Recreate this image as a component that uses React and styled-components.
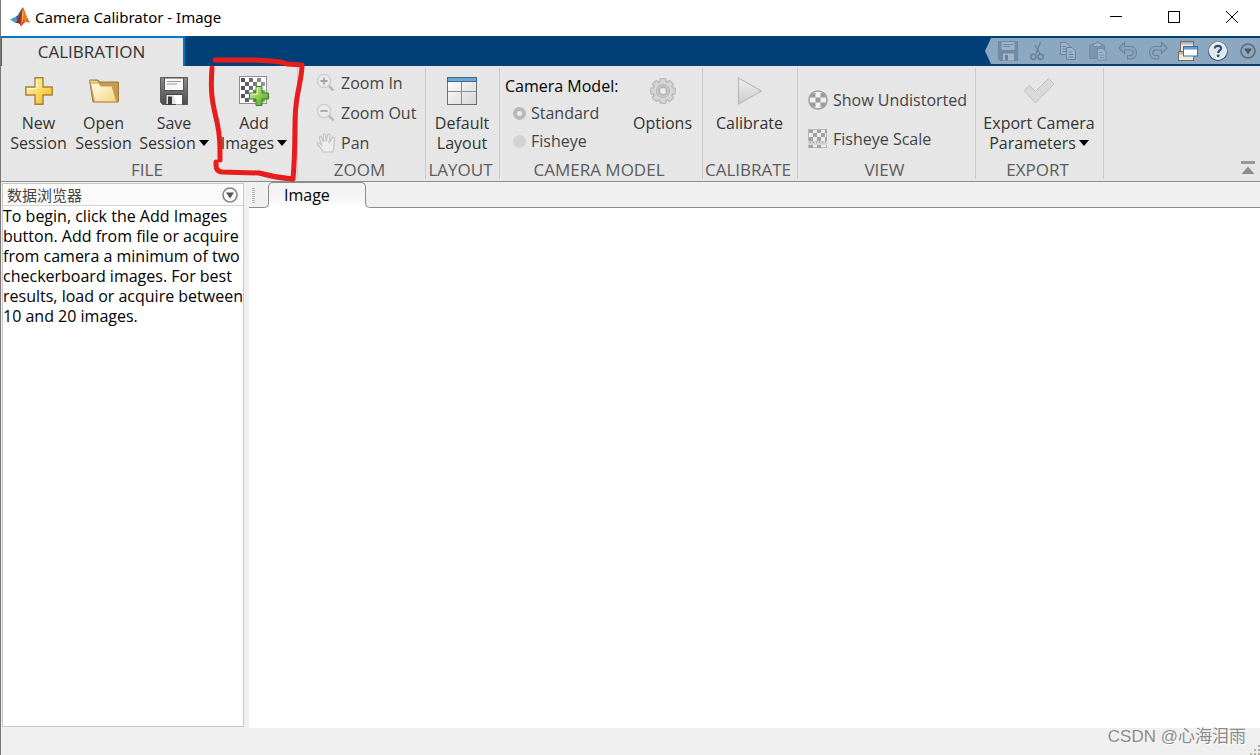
import React, { useState } from "react";
import styled, { createGlobalStyle, css } from "styled-components";

const GlobalStyle = createGlobalStyle`
  * {
    box-sizing: border-box;
  }

  body {
    margin: 0;
    background: #f0f0f0;
    font-family: "Open Sans", "Noto Sans", "Noto Sans CJK SC", sans-serif;
    font-size: 16px;
    line-height: 20px;
    color: #000;
  }

  button,
  input {
    font: inherit;
    margin: 0;
  }

  svg {
    display: block;
    flex: none;
  }
`;

/* ---------- icons ---------- */

const MatlabLogo = () => (
  <svg width="20" height="20" viewBox="0 0 20 20">
    <defs>
      <linearGradient id="peak" x1="0" y1="0" x2="1" y2="0">
        <stop offset="0" stopColor="#6d1d1c" />
        <stop offset="0.45" stopColor="#c23a1c" />
        <stop offset="0.7" stopColor="#ee8a2c" />
        <stop offset="1" stopColor="#a82c1a" />
      </linearGradient>
    </defs>
    <path d="M0 12.5 L6 9.5 L9 13 L5.5 16 Z" fill="#4a9bd4" />
    <path d="M6 9.5 C8.5 9 9.5 4 12.3 1 L11 10 L7.5 14.5 Z" fill="#3a5f8c" />
    <path
      d="M12.8 0 C15 3 16.5 10.5 20 16 C17 14 14.8 14.5 11 19.5 C10 16.5 8.5 15.5 5.5 16 C9.5 12.5 10.5 4 12.8 0 Z"
      fill="url(#peak)"
    />
    <path d="M12.9 1 C14.2 6 13.8 12 11 19.5 C12.2 12 11.8 7 12.9 1 Z" fill="#ffb648" />
  </svg>
);

const PlusIcon = () => (
  <svg width="28" height="28" viewBox="0 0 28 28">
    <defs>
      <linearGradient id="gold" x1="0" y1="0" x2="1" y2="1">
        <stop offset="0" stopColor="#fff6c4" />
        <stop offset="0.5" stopColor="#fbdb62" />
        <stop offset="1" stopColor="#eeb41c" />
      </linearGradient>
    </defs>
    <path
      d="M10 0.8 H18 V10 H27.2 V18 H18 V27.2 H10 V18 H0.8 V10 H10 Z"
      fill="url(#gold)"
      stroke="#a8803a"
      strokeWidth="1.4"
    />
    <path d="M11.5 2.5 V11.5 H2.5" fill="none" stroke="#fffbe4" strokeWidth="1.2" />
  </svg>
);

const FolderIcon = () => (
  <svg width="32" height="28" viewBox="0 0 32 28">
    <defs>
      <linearGradient id="folder" x1="0" y1="0" x2="1" y2="1">
        <stop offset="0" stopColor="#fffce8" />
        <stop offset="1" stopColor="#f3d983" />
      </linearGradient>
    </defs>
    <path d="M1.5 3 H10 L12 5 H30.5 V25 H5 Z" fill="#c69a4c" stroke="#a27835" />
    <path d="M1.5 3.5 L4.5 7.5 H8 L10 4 Z" fill="#f0d693" />
    <path d="M2.5 6 H10.5 L13 9 H24 L28.5 24.8 H6.5 Z" fill="url(#folder)" stroke="#c5a25a" />
  </svg>
);

const SaveIcon = () => (
  <svg width="28" height="28" viewBox="0 0 28 28">
    <defs>
      <linearGradient id="disk" x1="0" y1="0" x2="0" y2="1">
        <stop offset="0" stopColor="#8b8b8b" />
        <stop offset="1" stopColor="#4c4c4c" />
      </linearGradient>
    </defs>
    <path d="M0.5 0.5 H27.5 V27.5 H2.5 L0.5 25 Z" fill="url(#disk)" stroke="#5a5a5a" />
    <rect x="4.5" y="1" width="19" height="12.5" fill="#f7f7f7" stroke="#555" />
    <path d="M7 4.5 H21 M7 7 H17" stroke="#9a9a9a" />
    <rect x="6" y="17.5" width="16" height="10" fill="#e4e4e4" stroke="#444" />
    <path d="M14 18 H22 V27.5 H16 Z" fill="#fff" />
    <rect x="8" y="19.5" width="4" height="8" fill="#3d3d3d" />
  </svg>
);

const checks = (cols, size, start) => {
  const out = [];
  for (let r = 0; r < cols; r++) {
    for (let c = 0; c < cols; c++) {
      if ((r + c) % 2 === 0) {
        out.push(`M${start + c * size} ${start + r * size}h${size}v${size}h-${size}z`);
      }
    }
  }
  return out.join("");
};

const AddImagesIcon = () => (
  <svg width="30" height="30" viewBox="0 0 30 30">
    <defs>
      <linearGradient id="green" x1="0" y1="0" x2="1" y2="1">
        <stop offset="0" stopColor="#d9f5a6" />
        <stop offset="0.5" stopColor="#8fce52" />
        <stop offset="1" stopColor="#4a9c2c" />
      </linearGradient>
      <linearGradient id="board" x1="0" y1="0" x2="1" y2="0">
        <stop offset="0" stopColor="#4a5057" />
        <stop offset="1" stopColor="#9a9a9a" />
      </linearGradient>
    </defs>
    <rect x="0.5" y="0.5" width="27" height="27" fill="#fff" stroke="#8f8f8f" />
    <path d={checks(6, 4, 2)} fill="url(#board)" />
    <path
      d="M17 10.5 H23 V17 H29.5 V23 H23 V29.5 H17 V23 H10.5 V17 H17 Z"
      fill="url(#green)"
      stroke="#37821f"
    />
    <path d="M18.2 11.8 V18.2 H11.8" fill="none" stroke="#ecfbd2" />
  </svg>
);

const ZoomIcon = ({ plus }) => (
  <svg width="20" height="20" viewBox="0 0 20 20">
    <path d="M12.5 12.5 L17.5 17.5" stroke="#bababa" strokeWidth="2.6" />
    <circle cx="8" cy="8" r="6.6" fill="#ebebeb" stroke="#cccccc" strokeWidth="1.4" />
    <path d={plus ? "M4.5 8 H11.5 M8 4.5 V11.5" : "M4.5 8 H11.5"} stroke="#a4a4a4" strokeWidth="1.8" />
  </svg>
);

const PanIcon = () => (
  <svg width="20" height="20" viewBox="0 0 20 20">
    <path
      d="M7 19 C6.5 16.5 4.5 15 1.5 11.5 C0.6 10.2 2 9.2 3.2 10 L5.5 12 L3.5 4.8 C3.3 3.2 5 2.8 5.6 4.2 L7.6 9 L7.2 2.2 C7.3 0.7 9.2 0.6 9.5 2.2 L10.2 8.6 L11.6 2 C12.1 0.6 13.9 1 13.8 2.6 L13.4 9.2 L16.3 4.8 C17.2 3.6 18.9 4.4 18.5 5.9 C17.6 9.5 18.5 14.5 16.8 19 Z"
      fill="#ededed"
      stroke="#c4c4c4"
      strokeWidth="1.2"
    />
  </svg>
);

const LayoutIcon = () => (
  <svg width="30" height="28" viewBox="0 0 30 28">
    <defs>
      <linearGradient id="pane" x1="0" y1="0" x2="1" y2="1">
        <stop offset="0" stopColor="#fff" />
        <stop offset="1" stopColor="#d6d6d6" />
      </linearGradient>
    </defs>
    <rect x="0.5" y="0.5" width="29" height="27" fill="url(#pane)" stroke="#6e6e6e" />
    <rect x="0" y="0" width="30" height="5" fill="#3a6a94" />
    <rect x="1" y="1" width="28" height="3" fill="#74a6d0" />
    <path d="M14.5 5 V27 M1 14.5 H29" stroke="#8c8c8c" />
  </svg>
);

const GearIcon = () => (
  <svg width="28" height="28" viewBox="0 0 28 28">
    <g fill="#d6d6d6" stroke="#b8b8b8" strokeWidth="1.4">
      {[0, 45, 90, 135, 180, 225, 270, 315].map((a) => (
        <rect key={a} x="11" y="1.8" width="6" height="6" rx="1" transform={`rotate(${a} 14 14)`} />
      ))}
      <circle cx="14" cy="14" r="10" />
    </g>
    <g fill="#d6d6d6">
      {[0, 45, 90, 135, 180, 225, 270, 315].map((a) => (
        <rect key={a} x="11.7" y="2.5" width="4.6" height="6" transform={`rotate(${a} 14 14)`} />
      ))}
    </g>
    <circle cx="14" cy="14" r="6.6" fill="#cacaca" stroke="#b6b6b6" />
    <circle cx="14" cy="14" r="4" fill="#dedede" stroke="#b0b0b0" strokeWidth="1.5" />
    <circle cx="14" cy="14" r="2" fill="#f0f0f0" />
  </svg>
);

const PlayIcon = () => (
  <svg width="26" height="28" viewBox="0 0 26 28">
    <defs>
      <linearGradient id="play" x1="0" y1="0" x2="0" y2="1">
        <stop offset="0" stopColor="#f0f0f0" />
        <stop offset="1" stopColor="#cccccc" />
      </linearGradient>
    </defs>
    <path d="M1.5 1 L24.5 14 L1.5 27 Z" fill="url(#play)" stroke="#b9b9b9" strokeWidth="1.2" strokeLinejoin="round" />
  </svg>
);

const UndistortedIcon = () => (
  <svg width="20" height="20" viewBox="0 0 20 20">
    <circle cx="10" cy="10" r="9" fill="#f0f0f0" stroke="#a0a0a0" strokeWidth="1.6" />
    <path
      d="M7.5 7.5H12.5V12.5H7.5Z M3 3.8L7.5 3V7.5H2.2Z M12.5 3L17 3.8L17.8 7.5H12.5Z M2.2 12.5H7.5V17L3.5 16.2Z M12.5 12.5H17.8L16.5 16.2L12.5 17Z"
      fill="#9c9c9c"
    />
  </svg>
);

const FisheyeIcon = () => (
  <svg width="20" height="20" viewBox="0 0 20 20">
    <rect x="0.5" y="0.5" width="18" height="18" fill="#ececec" stroke="#b5b5b5" />
    <path
      d="M1 1H5V4H1Z M9 1H13V4H9Z M17 1H19V4H17Z M5 4H9V8H5Z M13 4H17V8H13Z M1 8H5V12H1Z M9 8H13V12H9Z M17 8H19V12H17Z M1 16H5V19H1Z M9 16H13V19H9Z M5 15H9V16H5Z M13 15H17V16H13Z"
      fill="#a2a2a2"
    />
    <rect x="0" y="12" width="19" height="4" fill="#d4d4d4" />
    <path d="M2.5 12V14.5M5.5 12V14M8.5 12V14.5M11.5 12V14M14.5 12V14.5M17.5 12V14" stroke="#adadad" />
  </svg>
);

const CheckIcon = () => (
  <svg width="32" height="28" viewBox="0 0 32 28">
    <path
      d="M1 13.5 L6.5 8.5 L12.5 14.5 L25.5 1.5 L31 7 L12.5 26 Z"
      fill="#d9d9d9"
      stroke="#c0c0c0"
      strokeLinejoin="round"
    />
  </svg>
);

const Caret = () => (
  <svg width="10" height="6" viewBox="0 0 10 6">
    <path d="M0 0 H10 L5 6 Z" fill="#000" />
  </svg>
);

const SmallSave = () => (
  <svg width="20" height="20" viewBox="0 0 20 20">
    <path d="M0.5 0.5 H19.5 V19.5 H2 L0.5 18 Z" fill="#6b8298" stroke="#657d94" />
    <rect x="3.5" y="1" width="13" height="8" fill="#9fb6ca" />
    <path d="M5 3.5H15M5 5.5H12" stroke="#6b8298" />
    <rect x="5" y="12.5" width="11" height="7" fill="#a9bed1" />
    <rect x="7" y="14" width="3" height="5.5" fill="#5f768c" />
  </svg>
);

const CutIcon = () => (
  <svg width="20" height="20" viewBox="0 0 20 20" fill="none" stroke="#5f768c">
    <path d="M12.5 1 L8 13 M7 4 L12 13" strokeWidth="1.4" />
    <circle cx="5.4" cy="15.8" r="2.6" strokeWidth="1.6" />
    <circle cx="12.6" cy="15.8" r="2.6" strokeWidth="1.6" />
  </svg>
);

const CopyIcon = () => (
  <svg width="20" height="20" viewBox="0 0 20 20" fill="#a5bacd" stroke="#5f768c">
    <path d="M2.5 1.5 H8 L11.5 5 V13.5 H2.5 Z" />
    <path d="M4.5 5.5H8M4.5 8H9M4.5 10.5H9" />
    <path d="M8.5 6.5 H14 L17.5 10 V18.5 H8.5 Z" />
    <path d="M10.5 11H14M10.5 13.5H15.5M10.5 16H15.5" />
  </svg>
);

const PasteIcon = () => (
  <svg width="20" height="20" viewBox="0 0 20 20" fill="#768ea5" stroke="#6b8298">
    <rect x="1.5" y="3.5" width="15" height="14" rx="1" />
    <path d="M5.5 5.5 V2.5 H8 V1 H11 V2.5 H13.5 V5.5 Z" fill="#a5bacd" />
    <path d="M9.5 7.5 H14.5 L18 11 V19 H9.5 Z" fill="#a5bacd" />
    <path d="M11.5 11.5H14.5M11.5 14H16M11.5 16.5H16" />
  </svg>
);

const UndoPath = "M6.5 1.5 L1 7 L6.5 12.5 V9 H12.5 C16 9 16 14.5 12.5 14.5 H9.5 V18 H12.5 C20.5 18 20.5 5.5 12.5 5.5 H6.5 Z";

const UndoIcon = () => (
  <svg width="20" height="20" viewBox="0 0 20 20">
    <path d={UndoPath} fill="#8ba4bc" stroke="#5f768c" strokeWidth="1.1" />
  </svg>
);

const RedoIcon = () => (
  <svg width="20" height="20" viewBox="0 0 20 20">
    <path d={UndoPath} transform="matrix(-1 0 0 1 20 0)" fill="#8ba4bc" stroke="#5f768c" strokeWidth="1.1" />
  </svg>
);

const WindowsIcon = () => (
  <svg width="20" height="20" viewBox="0 0 20 20">
    <rect x="2.5" y="0.5" width="13" height="10" fill="#eee9e2" stroke="#716b64" />
    <rect x="3" y="1" width="12" height="2.5" fill="#bdb5ac" />
    <rect x="0.5" y="10.5" width="15" height="9" fill="#eee9e2" stroke="#716b64" />
    <rect x="1" y="11" width="14" height="2.5" fill="#bdb5ac" />
    <rect x="5.5" y="5.5" width="14" height="9.5" fill="#fff" stroke="#3c6ea5" />
    <rect x="6" y="6" width="13" height="2.5" fill="#5f9bd6" />
  </svg>
);

const HelpIcon = () => (
  <svg width="20" height="20" viewBox="0 0 20 20">
    <defs>
      <linearGradient id="help" x1="0" y1="0" x2="0" y2="1">
        <stop offset="0" stopColor="#7c97b1" />
        <stop offset="1" stopColor="#274766" />
      </linearGradient>
    </defs>
    <circle cx="10" cy="10" r="10" fill="url(#help)" />
    <circle cx="10" cy="10" r="8.4" fill="#dfe7ef" stroke="#fff" />
    <path d="M6.9 7.5 C6.9 3.8 13.2 4 13 7.4 C12.8 9.6 10.2 9.5 10.2 12" fill="none" stroke="#2f4a66" strokeWidth="2.2" />
    <circle cx="10.2" cy="14.8" r="1.4" fill="#2f4a66" />
  </svg>
);

const MenuCircle = ({ dark }) => (
  <svg width="16" height="16" viewBox="0 0 16 16">
    <circle cx="8" cy="8" r="7" fill="none" stroke={dark ? "#5f6b76" : "#858585"} strokeWidth="1.6" />
    <path d="M4 5.5 H12 L8 11.5 Z" fill={dark ? "#4f5963" : "#555"} />
  </svg>
);

/* ---------- window frame ---------- */

const Window = styled.div`
  position: relative;
  display: flex;
  flex-direction: column;
  min-height: 100vh;
  border-left: 1px solid #777;
`;

const TitleBar = styled.header`
  display: flex;
  align-items: center;
  gap: 5px;
  height: 36px;
  padding: 0 18px 2px 9px;
  background: #fff;
`;

const Title = styled.h1`
  flex: 1;
  margin: 0;
  font-family: "Noto Sans", sans-serif;
  font-size: 15px;
  font-weight: 400;
`;

const WindowControls = styled.div`
  display: flex;
  gap: 38px;
`;

const PlainButton = styled.button`
  display: flex;
  align-items: center;
  justify-content: center;
  min-width: 20px;
  height: 20px;
  padding: 0;
  border: 0;
  background: transparent;
  color: inherit;
`;

const Ribbon = styled.nav`
  display: flex;
  justify-content: space-between;
  height: 30px;
  background: #004076;
`;

const RibbonTab = styled.button`
  width: 184px;
  padding: 0 2px 0 0;
  border: solid #0076c8;
  border-width: 2px 2px 0 1px;
  background: #e6e6e6;
  color: #333;
  font-size: 17px;
`;

const QuickAccess = styled.div`
  display: flex;
  align-items: center;
  gap: 10px;
  height: 26px;
  margin-top: 2px;
  padding: 0 2px 0 13px;
  background: #8ca8c0;
  clip-path: polygon(0 50%, 6px 0, 100% 0, 100% 100%, 6px 100%);

  button:disabled {
    opacity: 0.75;
  }
`;

/* ---------- toolstrip ---------- */

const Toolstrip = styled.div`
  display: flex;
  height: 116px;
  border-bottom: 1px solid #8c8c8c;
  background: #e6e6e6;
`;

const SectionBox = styled.section`
  display: flex;
  flex: none;
  flex-direction: column;
  width: ${(props) => props.$width}px;
  margin: 2px 0;
  border-right: 1px solid #cacaca;
`;

const SectionBody = styled.div`
  display: flex;
  flex: 1;
  justify-content: ${(props) => props.$align || "center"};
  padding-right: 1px;
`;

const SectionName = styled.div`
  height: 18px;
  padding-right: 4px;
  color: #5c5c5c;
  font-size: 17px;
  line-height: 18px;
  text-align: center;
  white-space: nowrap;
`;

const BigButton = styled.button`
  display: flex;
  flex-direction: column;
  align-items: center;
  width: ${(props) => props.$width}px;
  padding: 8px 0 0;
  border: 0;
  background: transparent;
  color: #333;
  white-space: nowrap;
`;

const BigIcon = styled.span`
  display: flex;
  align-items: center;
  height: 30px;
  margin-bottom: 7px;
`;

const CaretLine = styled.span`
  display: flex;
  align-items: center;
  gap: 3px;
`;

const Stack = styled.div`
  display: flex;
  flex-direction: column;
  padding: ${(props) => props.$pad};
`;

const SmallButton = styled.button`
  display: flex;
  align-items: center;
  gap: 5px;
  height: ${(props) => props.$height}px;
  padding: 0;
  border: 0;
  background: transparent;
  color: #444;
  white-space: nowrap;
`;

const ModelGroup = styled.fieldset`
  flex: 1;
  min-width: 0;
  margin: 0;
  padding: 8px 0 0 5px;
  border: 0;
`;

const Legend = styled.legend`
  float: left;
  width: 100%;
  padding: 0 0 3px;
  white-space: nowrap;
`;

const RadioLabel = styled.label`
  display: flex;
  clear: both;
  align-items: center;
  gap: 5px;
  height: 28px;
  padding-left: 8px;
  color: #444;
`;

const Radio = styled.input`
  appearance: none;
  width: 13px;
  height: 13px;
  border-radius: 50%;
  background: #d2d2d2;

  ${(props) =>
    props.checked &&
    css`
      border: 4px solid #b9b9b9;
      background: #ececec;
    `}
`;

const CollapseButton = styled(PlainButton)`
  align-self: flex-end;
  margin: 0 2px 3px auto;
`;

/* ---------- workspace ---------- */

const Workspace = styled.div`
  display: flex;
  flex: 1;
`;

const Browser = styled.aside`
  flex: none;
  width: 242px;
  margin: 1px 5px 1px 1px;
  border: 1px solid #c8c8c8;
  background: #fff;
`;

const BrowserHeader = styled.div`
  display: flex;
  align-items: center;
  justify-content: space-between;
  height: 22px;
  padding: 0 3px 0 4px;
  border-bottom: 1px solid #d4d4d4;
  background: #fafafa;
  color: #444;
  font-size: 15px;
`;

const Hint = styled.p`
  margin: 0;
`;

const Documents = styled.main`
  display: flex;
  flex: 1;
  flex-direction: column;
`;

const TabBar = styled.div`
  display: flex;
  align-items: flex-end;
  height: 26px;
`;

const TabLead = styled.div`
  display: flex;
  align-items: flex-end;
  width: 20px;
  height: 20px;
  padding: 0 0 4px 3px;
  border: solid #8c8c8c;
  border-width: 0 1px 1px 0;
  border-bottom-right-radius: 5px;
`;

const Grip = styled.div`
  width: 3px;
  height: 15px;
  background: repeating-linear-gradient(#b4b4b4 0 1px, transparent 1px 2px);
`;

const TabSlot = styled.div`
  width: 98px;
  height: 26px;
  margin: 0 -1px;
  border-radius: 5px 5px 0 0;
  background: linear-gradient(#f3f3f6 50%, #fff) center / 96px 100% no-repeat;
`;

const DocumentTab = styled.button`
  display: block;
  width: 100%;
  height: 21px;
  padding: 2px 0 0 15px;
  border: solid #8c8c8c;
  border-width: 1px 1px 0;
  border-radius: 5px 5px 0 0;
  background: transparent;
  text-align: left;
`;

const TabTrail = styled.div`
  flex: 1;
  height: 20px;
  border: solid #8c8c8c;
  border-width: 0 0 1px 1px;
  border-bottom-left-radius: 5px;
`;

const Canvas = styled.div`
  flex: 1;
  background: #fff;
`;

const StatusBar = styled.footer`
  display: flex;
  align-items: flex-end;
  justify-content: flex-end;
  height: 27px;
  background: #efefef;
`;

const Watermark = styled.div`
  position: absolute;
  right: 14px;
  bottom: 6px;
  color: #8a8a8a;
  font-family: "Liberation Sans", "Noto Sans CJK SC", sans-serif;
  font-size: 17px;
  line-height: 24px;
  text-shadow: 1px 1px 0 #fff;
`;

const MarkerDrawing = styled.svg`
  position: absolute;
  top: 54px;
  left: 204px;
  pointer-events: none;
`;

const Section = ({ name, width, align, children }) => (
  <SectionBox $width={width}>
    <SectionBody $align={align}>{children}</SectionBody>
    <SectionName>{name}</SectionName>
  </SectionBox>
);

const ToolButton = ({ icon, lines, width, menu, disabled }) => (
  <BigButton $width={width} disabled={disabled}>
    <BigIcon>{icon}</BigIcon>
    {lines.map((line, i) => (
      <CaretLine key={line}>
        {line}
        {menu && i === lines.length - 1 && <Caret />}
      </CaretLine>
    ))}
  </BigButton>
);

const quickActions = [
  { label: "Save", icon: <SmallSave />, disabled: true },
  { label: "Cut", icon: <CutIcon />, disabled: true },
  { label: "Copy", icon: <CopyIcon />, disabled: true },
  { label: "Paste", icon: <PasteIcon />, disabled: true },
  { label: "Undo", icon: <UndoIcon />, disabled: true },
  { label: "Redo", icon: <RedoIcon />, disabled: true },
  { label: "Windows", icon: <WindowsIcon /> },
  { label: "Help", icon: <HelpIcon /> },
  { label: "More", icon: <MenuCircle dark /> },
];

export default function App() {
  const [model, setModel] = useState("Standard");

  return (
    <Window>
      <GlobalStyle />
      <TitleBar>
        <MatlabLogo />
        <Title>Camera Calibrator - Image</Title>
        <WindowControls>
          <PlainButton aria-label="Minimize">
            <svg width="12" height="12" viewBox="0 0 12 12">
              <path d="M0 5.5 H12" stroke="#000" />
            </svg>
          </PlainButton>
          <PlainButton aria-label="Maximize">
            <svg width="12" height="12" viewBox="0 0 12 12">
              <rect x="0.5" y="0.5" width="11" height="11" fill="none" stroke="#000" />
            </svg>
          </PlainButton>
          <PlainButton aria-label="Close">
            <svg width="12" height="12" viewBox="0 0 12 12">
              <path d="M0 0 L12 12 M12 0 L0 12" stroke="#000" />
            </svg>
          </PlainButton>
        </WindowControls>
      </TitleBar>

      <Ribbon>
        <RibbonTab>CALIBRATION</RibbonTab>
        <QuickAccess>
          {quickActions.map((action) => (
            <PlainButton key={action.label} aria-label={action.label} disabled={action.disabled}>
              {action.icon}
            </PlainButton>
          ))}
        </QuickAccess>
      </Ribbon>

      <Toolstrip>
        <Section name="FILE" width={297} align="flex-end">
          <ToolButton width={65} icon={<PlusIcon />} lines={["New", "Session"]} />
          <ToolButton width={65} icon={<FolderIcon />} lines={["Open", "Session"]} />
          <ToolButton width={76} icon={<SaveIcon />} lines={["Save", "Session"]} menu />
          <ToolButton width={84} icon={<AddImagesIcon />} lines={["Add", "Images"]} menu />
        </Section>
        <Section name="ZOOM" width={128} align="flex-start">
          <Stack $pad="0 0 0 18px">
            <SmallButton $height={30} disabled>
              <ZoomIcon plus />
              Zoom In
            </SmallButton>
            <SmallButton $height={30} disabled>
              <ZoomIcon />
              Zoom Out
            </SmallButton>
            <SmallButton $height={30} disabled>
              <PanIcon />
              Pan
            </SmallButton>
          </Stack>
        </Section>
        <Section name="LAYOUT" width={74}>
          <ToolButton width={72} icon={<LayoutIcon />} lines={["Default", "Layout"]} />
        </Section>
        <Section name="CAMERA MODEL" width={203} align="flex-start">
          <ModelGroup disabled>
            <Legend>Camera Model:</Legend>
            {["Standard", "Fisheye"].map((name) => (
              <RadioLabel key={name}>
                <Radio
                  type="radio"
                  name="model"
                  value={name}
                  checked={model === name}
                  onChange={() => setModel(name)}
                />
                {name}
              </RadioLabel>
            ))}
          </ModelGroup>
          <ToolButton width={77} icon={<GearIcon />} lines={["Options"]} disabled />
        </Section>
        <Section name="CALIBRATE" width={95}>
          <ToolButton width={93} icon={<PlayIcon />} lines={["Calibrate"]} disabled />
        </Section>
        <Section name="VIEW" width={178} align="flex-start">
          <Stack $pad="12px 0 0 10px">
            <SmallButton $height={39} disabled>
              <UndistortedIcon />
              Show Undistorted
            </SmallButton>
            <SmallButton $height={39} disabled>
              <FisheyeIcon />
              Fisheye Scale
            </SmallButton>
          </Stack>
        </Section>
        <Section name="EXPORT" width={128}>
          <ToolButton width={126} icon={<CheckIcon />} lines={["Export Camera", "Parameters"]} menu disabled />
        </Section>
        <CollapseButton aria-label="Collapse toolstrip">
          <svg width="14" height="14" viewBox="0 0 14 14">
            <path d="M0 1.5 H14" stroke="#999" strokeWidth="3" />
            <path d="M0.5 13 L7 5.5 L13.5 13 Z" fill="#8c8c8c" />
          </svg>
        </CollapseButton>
      </Toolstrip>

      <Workspace>
        <Browser>
          <BrowserHeader>
            <span>数据浏览器</span>
            <PlainButton aria-label="Browser menu">
              <MenuCircle />
            </PlainButton>
          </BrowserHeader>
          <Hint>
            To begin, click the Add Images button. Add from file or acquire from camera a minimum of two
            checkerboard images. For best results, load or acquire between 10 and 20 images.
          </Hint>
        </Browser>
        <Documents>
          <TabBar>
            <TabLead>
              <Grip />
            </TabLead>
            <TabSlot>
              <DocumentTab>Image</DocumentTab>
            </TabSlot>
            <TabTrail />
          </TabBar>
          <Canvas />
        </Documents>
      </Workspace>

      <StatusBar>
        <svg width="10" height="10" viewBox="0 0 10 10">
          <path d="M8 0h2v2h-2z M4 4h2v2h-2z M8 4h2v2h-2z M0 8h2v2h-2z M4 8h2v2h-2z M8 8h2v2h-2z" fill="#b5b0a4" />
        </svg>
      </StatusBar>

      <Watermark>CSDN @心海泪雨</Watermark>
      <MarkerDrawing width="104" height="132" viewBox="205 54 104 132">
        <g fill="none" stroke="#e81c1c" strokeWidth="5" strokeLinecap="round" strokeLinejoin="round">
          <path d="M215 60 H252 C268 61 279 60 287 64 L302 65 C302 78 297 92 296 106 C294 118 296 146 293 179 C280 178 270 176 259 173 L222 172 C216 171 216 168 216 162" />
          <path d="M212 68 C210 95 213 105 217 122 C220 136 220 144 220 160" />
        </g>
      </MarkerDrawing>
    </Window>
  );
}
